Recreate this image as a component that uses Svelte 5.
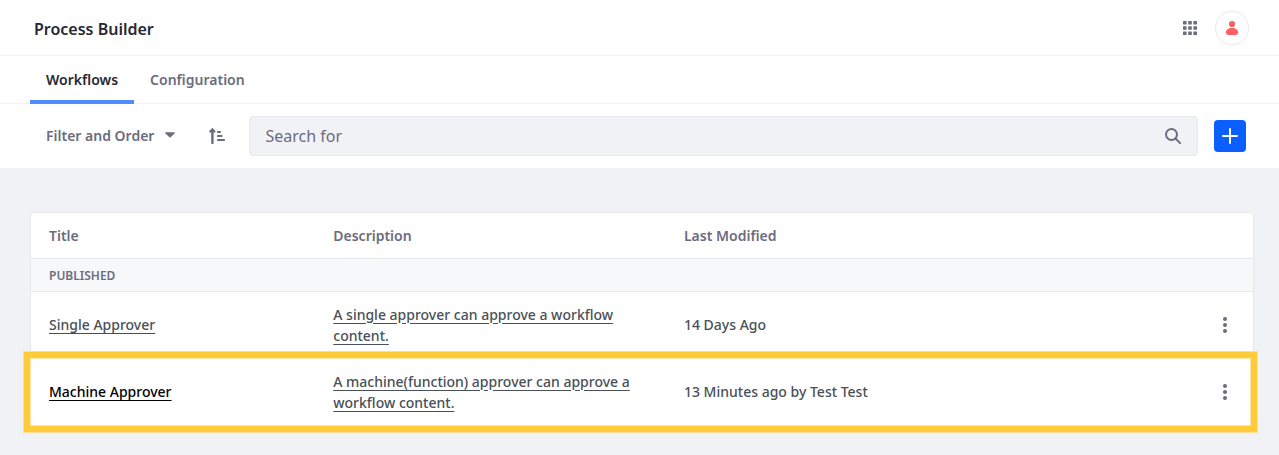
<script>
  const tabs = [
    { label: 'Workflows', active: true },
    { label: 'Configuration', active: false }
  ];

  const workflows = [
    {
      title: 'Single Approver',
      description: 'A single approver can approve a workflow content.',
      modified: '14 Days Ago',
      selected: false
    },
    {
      title: 'Machine Approver',
      description: 'A machine(function) approver can approve a workflow content.',
      modified: '13 Minutes ago by Test Test',
      selected: true
    }
  ];

  const gridSteps = [0, 5.2, 10.4];
</script>

<header class="topbar">
  <h1>Process Builder</h1>
  <div class="topbar-actions">
    <button class="icon-button" type="button" aria-label="Applications">
      <svg width="14" height="14" viewBox="0 0 14 14" fill="currentColor">
        {#each gridSteps as y}
          {#each gridSteps as x}
            <rect {x} {y} width="3.6" height="3.6" rx="0.5" />
          {/each}
        {/each}
      </svg>
    </button>
    <button class="avatar" type="button" aria-label="User profile">
      <svg width="14" height="16" viewBox="0 0 14 16" fill="currentColor">
        <circle cx="7" cy="4" r="3.1" />
        <path d="M7 7.900c3.600 0 6.100 1.700 6.100 4.400 0 1.500-.9 2.600-2.400 2.600H3.300C1.800 14.900.9 13.800.9 12.300.9 9.600 3.400 7.900 7 7.900z" />
      </svg>
    </button>
  </div>
</header>

<nav class="tabs">
  {#each tabs as tab}
    <a href="#{tab.label.toLowerCase()}" class:active={tab.active}>{tab.label}</a>
  {/each}
</nav>

<div class="toolbar">
  <button class="filter" type="button">
    Filter and Order
    <svg width="10" height="6" viewBox="0 0 10 6" fill="currentColor">
      <path d="M1 0.300h8c.7 0 1 .7.5 1.200L5.600 5.200a.9.9 0 0 1-1.200 0L.5 1.500C0 1 .3.300 1 .300z" />
    </svg>
  </button>
  <button class="icon-button sort" type="button" aria-label="Reverse sort direction">
    <svg width="16" height="16" viewBox="0 0 16 16" fill="currentColor">
      <path d="M2.200 15V4.500H1C.1 4.500-.2 3.700.4 3.100L2.600.5a1 1 0 0 1 1.500 0l2.200 2.600c.6.600.3 1.400-.6 1.400H4.600V15a1.200 1.200 0 0 1-2.400 0z" />
      <rect x="8" y="3" width="4" height="2" rx="0.700" />
      <rect x="8" y="7" width="5.500" height="2" rx="0.700" />
      <rect x="8" y="11" width="8" height="2" rx="0.700" />
    </svg>
  </button>
  <form class="search" role="search">
    <input type="search" placeholder="Search for" aria-label="Search for" />
    <button class="icon-button" type="button" aria-label="Search">
      <svg width="16" height="16" viewBox="0 0 16 16" fill="none" stroke="currentColor" stroke-width="2">
        <circle cx="6.500" cy="6.500" r="5.500" />
        <path d="M10.500 10.500l4.600 4.600" stroke-linecap="round" />
      </svg>
    </button>
  </form>
  <button class="add" type="button" aria-label="New workflow">
    <svg width="16" height="16" viewBox="0 0 16 16" fill="none" stroke="currentColor" stroke-width="2" stroke-linecap="round">
      <path d="M8 1v14M1 8h14" />
    </svg>
  </button>
</div>

<main>
  <div class="card">
    <table>
      <colgroup>
        <col class="col-title" />
        <col class="col-description" />
        <col />
        <col class="col-actions" />
      </colgroup>
      <thead>
        <tr>
          <th scope="col">Title</th>
          <th scope="col">Description</th>
          <th scope="col">Last Modified</th>
          <td></td>
        </tr>
      </thead>
      <tbody>
        <tr class="group">
          <th colspan="4" scope="rowgroup">PUBLISHED</th>
        </tr>
        {#each workflows as workflow}
          <tr class="item" class:selected={workflow.selected}>
            <td><a class="title" href="#workflow">{workflow.title}</a></td>
            <td><a href="#workflow">{workflow.description}</a></td>
            <td>{workflow.modified}</td>
            <td class="actions">
              <button class="icon-button" type="button" aria-label="Actions for {workflow.title}">
                <svg width="4" height="16" viewBox="0 0 4 16" fill="currentColor">
                  <circle cx="2" cy="2" r="2" />
                  <circle cx="2" cy="8" r="2" />
                  <circle cx="2" cy="14" r="2" />
                </svg>
              </button>
              {#if workflow.selected}
                <span class="highlight"></span>
              {/if}
            </td>
          </tr>
        {/each}
      </tbody>
    </table>
  </div>
</main>

<style>
  :global(body) {
    background: #f1f2f5;
    color: #495057;
    font-family: 'Noto Sans', sans-serif;
    font-size: 14px;
    line-height: 21px;
  }

  :global(*) {
    box-sizing: border-box;
  }

  svg {
    display: block;
  }

  button {
    border: 0;
    padding: 0;
    background: none;
    color: #6b6c7e;
    font: inherit;
    cursor: pointer;
  }

  .icon-button {
    display: flex;
    align-items: center;
    justify-content: center;
    width: 32px;
    height: 32px;
  }

  .topbar {
    display: flex;
    align-items: center;
    justify-content: space-between;
    height: 56px;
    padding: 0 30px 0 34px;
    border-bottom: 1px solid #f1f2f5;
    background: #fff;
  }

  h1 {
    margin: 0;
    padding-top: 2px;
    color: #272833;
    font-size: 16px;
    font-weight: 600;
    line-height: 24px;
  }

  .topbar-actions {
    display: flex;
    align-items: center;
    gap: 9px;
  }

  .avatar {
    display: flex;
    align-items: center;
    justify-content: center;
    width: 34px;
    height: 34px;
    border: 1px solid #e7e7ed;
    border-radius: 50%;
    color: #ff5f5f;
  }

  .tabs {
    display: flex;
    height: 48px;
    padding: 0 30px;
    border-bottom: 1px solid #f1f2f5;
    background: #fff;
  }

  .tabs a {
    height: 48px;
    padding: 13px 16px 0;
    color: #6b6c7e;
    font-weight: 600;
    text-decoration: none;
  }

  .tabs .active {
    border-bottom: 4px solid #528bff;
    color: #272833;
  }

  .toolbar {
    display: flex;
    align-items: center;
    height: 64px;
    padding: 0 33px 0 46px;
    background: #fff;
  }

  .filter {
    display: flex;
    align-items: center;
    gap: 11px;
    padding-bottom: 2px;
    font-weight: 600;
    white-space: nowrap;
  }

  .sort {
    margin: 0 16px 0 26px;
  }

  .search {
    display: flex;
    flex: 1;
    align-items: center;
    height: 40px;
    margin-right: 16px;
    padding: 0 8px 0 15px;
    border: 1px solid #e7e7ed;
    border-radius: 4px;
    background: #f1f2f5;
  }

  input {
    flex: 1;
    min-width: 0;
    padding: 0;
    border: 0;
    outline: 0;
    background: none;
    color: #272833;
    font: inherit;
    font-size: 16px;
    line-height: 24px;
    appearance: none;
  }

  input::placeholder {
    color: #6b6c7e;
  }

  .add {
    display: flex;
    align-items: center;
    justify-content: center;
    width: 32px;
    height: 32px;
    border-radius: 4px;
    background: #0b5fff;
    color: #fff;
  }

  main {
    padding: 44px 25px 28px 30px;
  }

  .card {
    border: 1px solid #e7e7ed;
    border-radius: 4px;
    background: #fff;
  }

  table {
    width: 100%;
    border-spacing: 0;
    table-layout: fixed;
  }

  .col-title {
    width: 24%;
  }

  .col-description {
    width: 28.7%;
  }

  .col-actions {
    width: 64px;
  }

  th,
  td {
    padding: 0 18px 0 9px;
    text-align: left;
    vertical-align: middle;
  }

  th:first-child,
  td:first-child {
    padding-left: 18px;
  }

  th {
    color: #6b6c7e;
    font-weight: 600;
  }

  thead th,
  thead td {
    height: 46px;
    border-bottom: 1px solid #e7e7ed;
  }

  .group th {
    height: 33px;
    padding-top: 2px;
    border-bottom: 1px solid #e7e7ed;
    background: #f7f8f9;
    font-size: 12px;
    line-height: 18px;
  }

  .item {
    position: relative;
  }

  .item td {
    height: 67px;
    padding-bottom: 2px;
    font-weight: 500;
  }

  .item a {
    color: inherit;
    text-decoration: underline;
    text-underline-offset: 3px;
  }

  .item .actions {
    padding: 0 12px 2px 0;
  }

  .actions .icon-button {
    margin-left: auto;
  }

  .selected .title {
    color: #000;
  }

  .highlight {
    position: absolute;
    inset: -7px -4px -6px -7px;
    border: 6px solid #ffcb38;
    box-shadow: 0 0 0 1px #fbdf94, inset 0 0 0 1px #fde6a6;
    pointer-events: none;
  }
</style>
